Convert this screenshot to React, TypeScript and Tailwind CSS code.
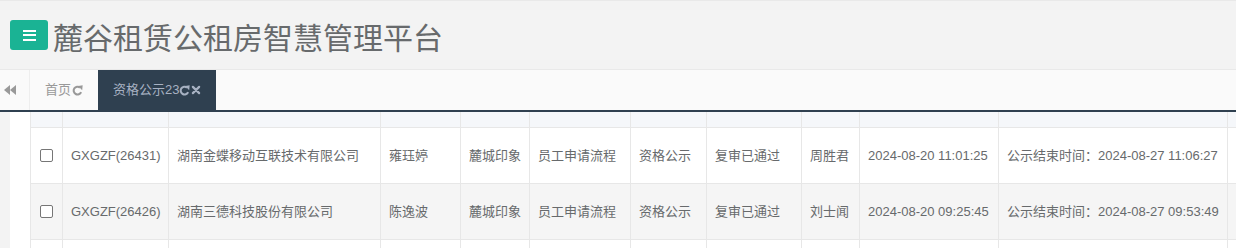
import React from "react";

const font = { fontFamily: '"Liberation Sans", "Noto Sans CJK SC", Arial, sans-serif' };

function Refresh({ color }: { color: string }) {
  return (
    <svg width="11" height="11" viewBox="0 0 16 16" className="inline-block">
      <path d="M13.2 10.2A5.6 5.6 0 1 1 11.6 3.8" stroke={color} strokeWidth="3" fill="none" />
      <polygon points="9,1.5 15.5,0.5 14.8,7.5" fill={color} />
    </svg>
  );
}

function Times({ color }: { color: string }) {
  return (
    <svg width="10" height="10" viewBox="0 0 16 16" className="inline-block">
      <path d="M3 3L13 13M13 3L3 13" stroke={color} strokeWidth="3.6" strokeLinecap="round" />
    </svg>
  );
}

const cols = "grid grid-cols-[32px_106px_212px_80px_69px_101px_76px_95px_58px_139px_229px_120px]";

const rows = [
  ["GXGZF(26431)", "湖南金蝶移动互联技术有限公司", "雍珏婷", "麓城印象", "员工申请流程", "资格公示", "复审已通过", "周胜君", "2024-08-20 11:01:25", "公示结束时间：2024-08-27 11:06:27", ""],
  ["GXGZF(26426)", "湖南三德科技股份有限公司", "陈逸波", "麓城印象", "员工申请流程", "资格公示", "复审已通过", "刘士闻", "2024-08-20 09:25:45", "公示结束时间：2024-08-27 09:53:49", ""],
  ["", "", "", "", "", "", "", "", "", "", ""],
];

export default function App() {
  return (
    <div className="w-[1236px] h-[248px] overflow-hidden bg-[#f3f3f3]" style={font}>
      {/* header */}
      <div className="h-[70px] border-t border-b border-[#e9e9e9] bg-[#f3f3f3] flex items-center pl-[10px]">
        <div className="w-[38px] h-[30px] rounded-[3px] bg-[#1ab394] flex flex-col items-center justify-center gap-[2.5px]">
          <div className="w-[13px] h-[2px] bg-white" />
          <div className="w-[13px] h-[2px] bg-white" />
          <div className="w-[13px] h-[2px] bg-white" />
        </div>
        <div className="ml-[5px] text-[30px] leading-none text-[#676a6c] font-['Noto_Sans_CJK_SC',sans-serif] mt-[1px]">
          麓谷租赁公租房智慧管理平台
        </div>
      </div>
      {/* tab bar */}
      <div className="h-[40px] bg-[#fafafa] flex text-[13px]">
        <div className="w-[30px] border-r border-[#eeeeee] flex items-center pl-[4px]">
          <svg width="12" height="10" viewBox="0 0 12 10">
            <polygon points="6,0 6,10 0,5" fill="#999" />
            <polygon points="12,0 12,10 6,5" fill="#999" />
          </svg>
        </div>
        <div className="w-[68px] flex items-center pl-[15px] text-[#999] gap-[1px]">
          <span>首页</span>
          <Refresh color="#999" />
        </div>
        <div className="w-[118px] bg-[#2f4050] flex items-center pl-[15px] text-[#a7b1c2]">
          <span>资格公示23</span>
          <Refresh color="#a7b1c2" />
          <span className="ml-[1px] flex items-center"><Times color="#a7b1c2" /></span>
        </div>
      </div>
      <div className="h-[2px] bg-[#2f4050]" />
      {/* body */}
      <div className="pl-[10px]">
        <div className="bg-white pl-[20px] h-[136px] overflow-hidden text-[13px] text-[#676a6c]">
          <div className={cols}>
            {Array.from({ length: 12 }).map((_, i) => (
              <div key={i} className="h-[16px] bg-[#f5f7fa] border-l border-b border-[#e7e7e7]" />
            ))}
          </div>
          {rows.map((r, ri) => (
            <div key={ri} className={`${cols} ${ri === 1 ? "bg-[#f5f5f5]" : "bg-white"}`}>
              <div className="h-[56px] border-l border-b border-[#e7e7e7] flex items-center justify-center">
                {ri < 2 && <div className="w-[13px] h-[13px] border border-[#767676] rounded-[2px] bg-white" />}
              </div>
              {r.map((c, ci) => (
                <div key={ci} className="h-[56px] border-l border-b border-[#e7e7e7] flex items-center px-[8px] whitespace-nowrap overflow-hidden">
                  {c}
                </div>
              ))}
            </div>
          ))}
        </div>
      </div>
    </div>
  );
}
